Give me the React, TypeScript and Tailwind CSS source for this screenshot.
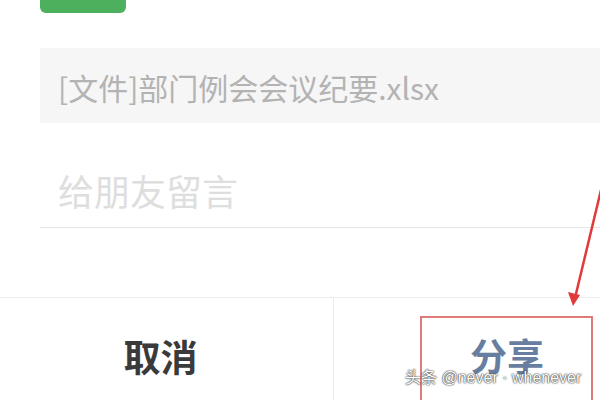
import React from "react";

const font = "font-['Noto_Sans_CJK_SC','Noto_Sans',sans-serif]";

const App = () => {
  return (
    <div className={`relative w-[600px] h-[400px] overflow-hidden bg-white ${font}`}>
      <div className="flex flex-col">
        <div className="ml-[40px] w-[86px] h-[13px] rounded-b-[6px] bg-[#4cb05c]" />
        <div className="ml-[40px] mt-[35px] h-[75px] bg-[#f6f6f6] flex items-center pl-[18px] pt-[2px]">
          <p className="text-[30px] text-[#b3b3b3] leading-none whitespace-nowrap">[文件]部门例会会议纪要.xlsx</p>
        </div>
        <div className="ml-[40px] h-[105px] border-b border-[#e6e6e6] flex items-center pl-[18px] pt-[30px]">
          <p className="text-[36px] text-[#dedede] leading-none">给朋友留言</p>
        </div>
        <div className="mt-[69px] h-[103px] border-t border-[#ececec] grid grid-cols-[334px_1fr]">
          <div className="border-r border-[#ececec] flex items-center justify-center pr-[12px] pt-[14px]">
            <span className="text-[37px] font-bold text-[#3a3a3a] leading-none">取消</span>
          </div>
          <div className="flex items-center justify-center pl-[80px] pt-[12px]">
            <span className="text-[37px] font-bold text-[#687ea1] leading-none">分享</span>
          </div>
        </div>
      </div>

      <div className="absolute left-[420px] top-[316px] w-[173px] h-[100px] border-2 border-[#e07b7b]" />

      <svg className="absolute left-0 top-0" width="600" height="400" viewBox="0 0 600 400">
        <line x1="601" y1="190" x2="575" y2="298" stroke="#e03a3a" strokeWidth="2.5" />
        <polygon points="573,306 568,292 580,295" fill="#e03a3a" />
      </svg>

      <p className="absolute left-[405px] top-[370px] text-[16px] text-white leading-none whitespace-nowrap font-['Liberation_Sans','Noto_Sans_CJK_SC',sans-serif] [text-shadow:0_0_2px_#222,0_0_1px_#222]">
        头条 @never · whenever
      </p>
    </div>
  );
};

export default App;
